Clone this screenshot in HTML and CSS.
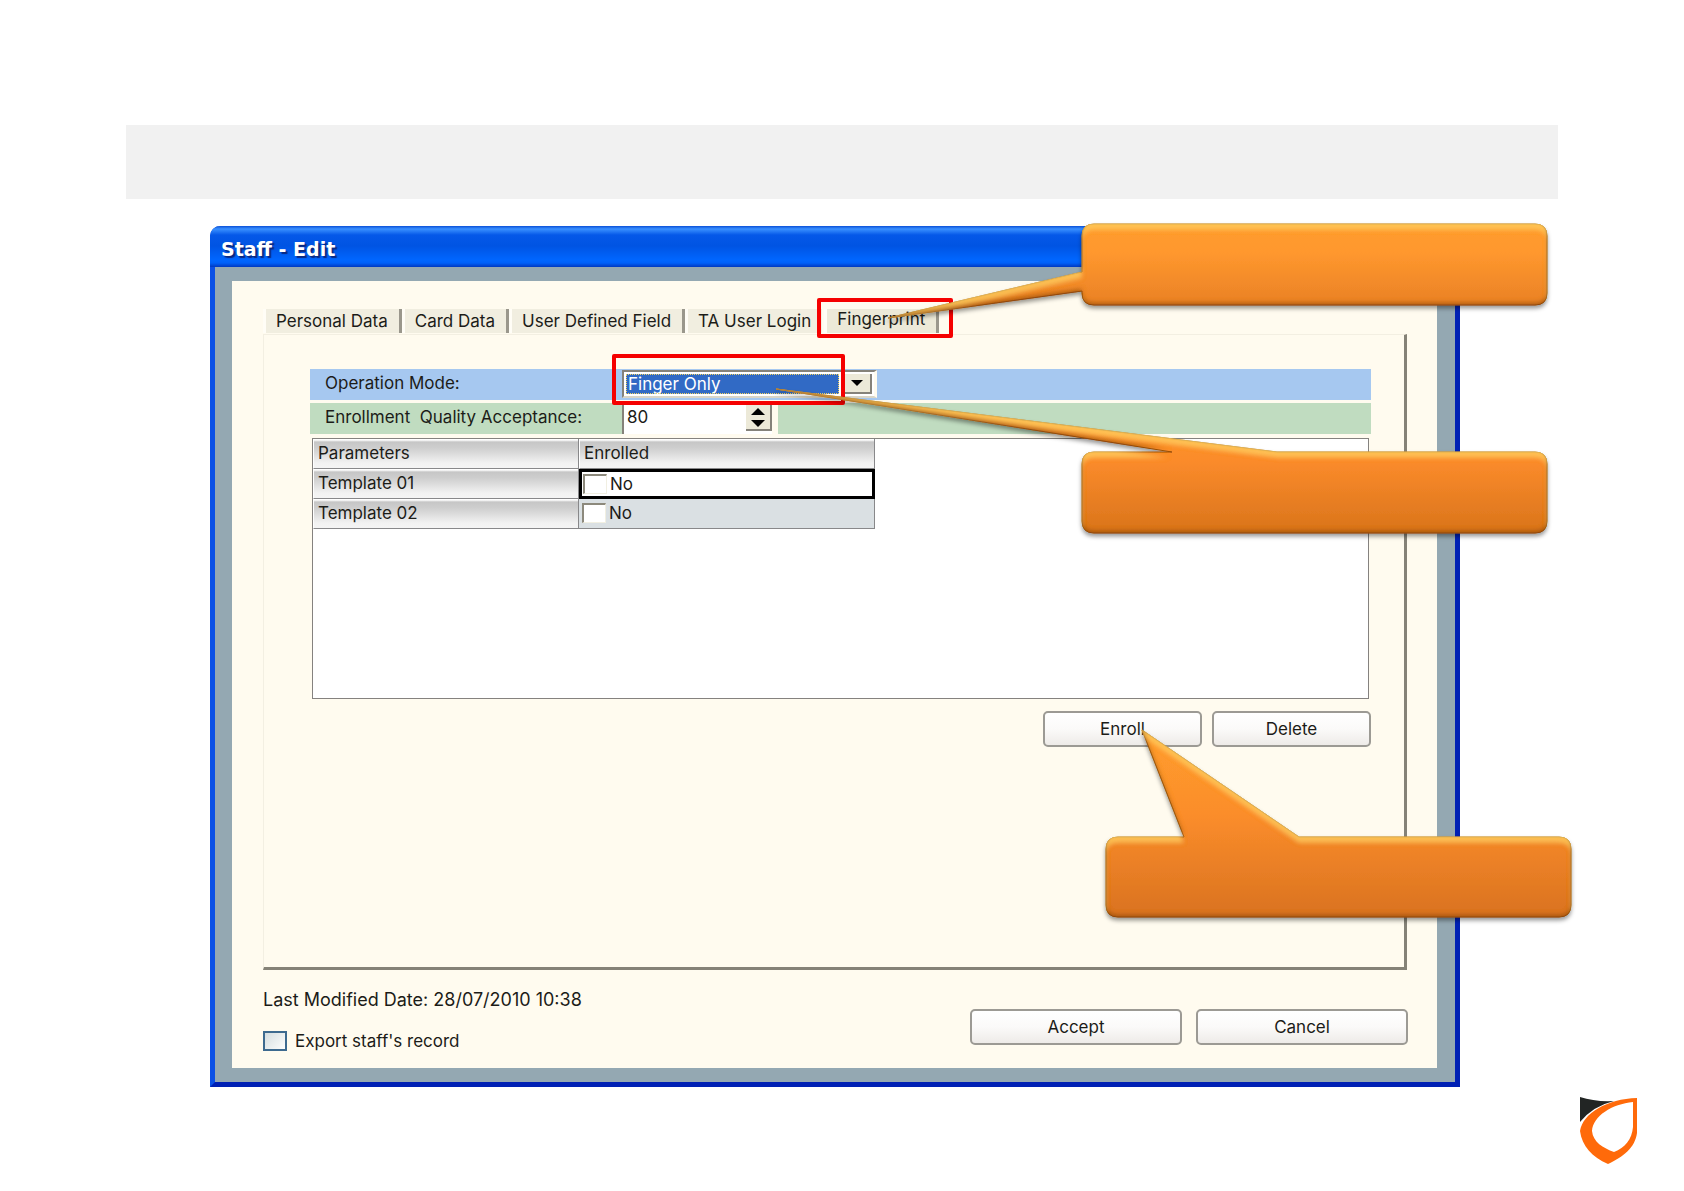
FILE: index.html
```html
<!DOCTYPE html>
<html lang="en">
<head>
    <meta charset="UTF-8">
    <meta name="viewport" content="width=device-width, initial-scale=1.0">
    <title>Staff - Edit</title>
    <link rel="stylesheet" href="styles.css">
</head>
<body>
    <div class="page">
        <header class="banner"></header>

        <main class="window">
            <h1 class="title-bar">Staff - Edit</h1>
            <div class="window-body">
                <div class="tabs" role="tablist">
                    <button type="button" class="tab" role="tab">Personal Data</button>
                    <button type="button" class="tab" role="tab">Card Data</button>
                    <button type="button" class="tab" role="tab">User Defined Field</button>
                    <button type="button" class="tab tab-last" role="tab">TA User Login</button>
                    <button type="button" class="tab tab-active highlight" role="tab" aria-selected="true">Fingerprint</button>
                </div>

                <section class="panel">
                    <div class="row row-blue">
                        <label class="row-label" for="mode">Operation Mode:</label>
                        <div class="combo highlight">
                            <select class="combo-select" id="mode">
                                <option>Finger Only</option>
                            </select>
                            <span class="combo-arrow">
                                <svg width="12" height="6" viewBox="0 0 12 6"><path d="M0 0h12L6 6z"/></svg>
                            </span>
                        </div>
                    </div>
                    <div class="row row-green">
                        <label class="row-label" for="quality">Enrollment&nbsp; Quality Acceptance:</label>
                        <div class="spinner">
                            <input class="spinner-input" id="quality" type="number" value="80">
                            <div class="spinner-buttons">
                                <button type="button" class="spinner-button" aria-label="Increase">
                                    <svg width="14" height="7" viewBox="0 0 14 7"><path d="M0 7h14L7 0z"/></svg>
                                </button>
                                <button type="button" class="spinner-button" aria-label="Decrease">
                                    <svg width="14" height="7" viewBox="0 0 14 7"><path d="M0 0h14L7 7z"/></svg>
                                </button>
                            </div>
                        </div>
                    </div>

                    <div class="grid-box">
                        <table class="templates">
                            <thead>
                                <tr><th class="col-name">Parameters</th><th>Enrolled</th></tr>
                            </thead>
                            <tbody>
                                <tr>
                                    <th>Template 01</th>
                                    <td class="cell-focus"><label class="check"><input type="checkbox" class="check-box">No</label></td>
                                </tr>
                                <tr>
                                    <th>Template 02</th>
                                    <td><label class="check"><input type="checkbox" class="check-box">No</label></td>
                                </tr>
                            </tbody>
                        </table>
                    </div>

                    <div class="panel-actions">
                        <button type="button" class="button">Enroll</button>
                        <button type="button" class="button">Delete</button>
                    </div>
                </section>

                <footer class="footer">
                    <div class="footer-info">
                        <p class="modified">Last Modified Date: 28/07/2010 10:38</p>
                        <label class="export"><input type="checkbox" class="export-box">Export staff's record</label>
                    </div>
                    <div class="footer-actions">
                        <button type="button" class="button button-wide">Accept</button>
                        <button type="button" class="button button-wide">Cancel</button>
                    </div>
                </footer>
            </div>
        </main>

        <!-- callouts laid over the window -->
        <svg class="callouts" width="1684" height="1191" viewBox="0 0 1684 1191" aria-hidden="true">
            <defs>
                <linearGradient id="body1" x1="0" y1="0" x2="0" y2="1">
                    <stop offset="0" stop-color="#ff9c2c"/>
                    <stop offset="0.3" stop-color="#ff982e"/>
                    <stop offset="1" stop-color="#e47b24"/>
                </linearGradient>
                <linearGradient id="body2" gradientUnits="userSpaceOnUse" x1="0" y1="389" x2="0" y2="533">
                    <stop offset="0" stop-color="#ffa030"/>
                    <stop offset="0.5" stop-color="#fb8b2b"/>
                    <stop offset="1" stop-color="#d9741b"/>
                </linearGradient>
                <linearGradient id="body3" gradientUnits="userSpaceOnUse" x1="0" y1="730" x2="0" y2="918">
                    <stop offset="0" stop-color="#ff9e2e"/>
                    <stop offset="0.45" stop-color="#fb8d2b"/>
                    <stop offset="1" stop-color="#d97220"/>
                </linearGradient>
                <filter id="bevel" x="-5%" y="-10%" width="110%" height="125%">
                    <feGaussianBlur in="SourceAlpha" stdDeviation="2" result="soft"/>
                    <feOffset in="soft" dy="3" result="low"/>
                    <feFlood flood-color="#000" flood-opacity="0.4"/>
                    <feComposite in2="low" operator="in" result="shadow"/>
                    <feOffset in="soft" dy="6" result="down"/>
                    <feFlood flood-color="#ffd060" flood-opacity="0.7"/>
                    <feComposite in2="down" operator="out"/>
                    <feComposite in2="SourceAlpha" operator="in" result="light"/>
                    <feOffset in="soft" dy="-3" result="up"/>
                    <feFlood flood-color="#8a450c" flood-opacity="0.7"/>
                    <feComposite in2="up" operator="out"/>
                    <feComposite in2="SourceAlpha" operator="in" result="dark"/>
                    <feMerge>
                        <feMergeNode in="shadow"/>
                        <feMergeNode in="SourceGraphic"/>
                        <feMergeNode in="light"/>
                        <feMergeNode in="dark"/>
                    </feMerge>
                </filter>
            </defs>
            <g stroke="#9c5010" stroke-width="1" filter="url(#bevel)">
                <path fill="url(#body1)" d="M1094 224H1535Q1547 224 1547 236V293Q1547 305 1535 305H1094Q1082 305 1082 293V291L888 318L1082 272V236Q1082 224 1094 224Z"/>
            </g>
            <g stroke="#9c5010" stroke-width="1" filter="url(#bevel)">
                <path fill="url(#body2)" d="M1094 452H1172L776 389L1277 452H1535Q1547 452 1547 464V521Q1547 533 1535 533H1094Q1082 533 1082 521V464Q1082 452 1094 452Z"/>
            </g>
            <g stroke="#9c5010" stroke-width="1" filter="url(#bevel)">
                <path fill="url(#body3)" d="M1118 837H1184L1142 730L1299 837H1559Q1571 837 1571 849V905Q1571 917 1559 917H1118Q1106 917 1106 905V849Q1106 837 1118 837Z"/>
            </g>
        </svg>

        <svg class="logo" width="57" height="67" viewBox="0 0 57 67" role="img" aria-label="Logo">
            <path fill="#222524" d="M0 0Q15 5 34 4Q13 9 0 25Z"/>
            <path fill="#ff6a0a" fill-rule="evenodd" d="M57 1V36C55 51 43 60 28 67C12 60 2 49 0 34C3 16 27 2 57 1ZM53 5C32 7 13 19 12 34C13 45 23 51 34 55C45 51 52 42 53 30Z"/>
        </svg>
    </div>
</body>
</html>
```

FILE: styles.css
```css
* {
    box-sizing: border-box;
}
body {
    margin: 0;
    background-color: #fff;
    font-family: Inter, "Liberation Sans", sans-serif;
    font-size: 17px;
    line-height: 24px;
    color: #1c1c18;
}
button,
select,
input {
    margin: 0;
    padding: 0;
    border: none;
    border-radius: 0;
    font: inherit;
    color: inherit;
}
.page {
    position: relative;
    min-height: 100vh;
    padding: 125px 126px 104px;
}
.banner {
    height: 74px;
    background-color: #f1f1f1;
}

/* window frame */
.window {
    margin: 27px 98px 0 84px;
    border: 5px solid;
    border-color: #0050e0 #0020b4 #0020b4 #0a50e6;
    border-top: none;
    border-radius: 10px 10px 0 0;
    background-color: #94a8b2;
}
.title-bar {
    height: 41px;
    margin: 0 -5px;
    padding: 3px 11px 0;
    border-radius: 10px 10px 0 0;
    background: linear-gradient(#0a50d8 0, #3a90ff 3px, #0558e8 9px, #0054e3 20px, #0066ff 34px, #0060f8 37px, #0038c0 41px);
    font-family: "DejaVu Sans", sans-serif;
    font-size: 19px;
    line-height: 40px;
    font-weight: bold;
    color: #fff;
    text-shadow: 2px 2px 1px #0a2880;
}
.window-body {
    margin: 14px 18px 14px 17px;
    padding: 28px 30px 15px 31px;
    background-color: #fffbef;
}

/* tabs */
.tabs {
    display: flex;
    height: 25px;
}
.tab {
    height: 24px;
    padding: 0 11px 0 10px;
    border-right: 3px solid #9a978c;
    border-left: 3px solid #fffdf6;
    background-color: #f1eee0;
    white-space: nowrap;
}
.tab-last {
    border-right: none;
}
.tab-active {
    margin-left: 2px;
    padding-bottom: 4px;
    background-color: #ece9d8;
    line-height: 20px;
}

/* red marker frames */
.highlight {
    position: relative;
}
.highlight::after {
    content: "";
    position: absolute;
    border: 4px solid #f50000;
    border-radius: 2px;
}
.tab-active::after {
    inset: -11px -17px -5px -10px;
}
.combo::after {
    inset: -18px 29px -9px -12px;
}

/* fingerprint panel */
.panel {
    padding: 34px 33px 220px 46px;
    border: 1px solid #f3efe2;
    border-right: 3px solid #858277;
    border-bottom: 3px solid #858277;
}
.row {
    display: flex;
    align-items: center;
    height: 31px;
    margin-bottom: 3px;
}
.row-blue {
    background-color: #a6c8f0;
}
.row-green {
    margin-bottom: 4px;
    background-color: #c0dcc0;
}
.row-label {
    width: 312px;
    padding: 0 0 4px 15px;
    white-space: nowrap;
}
.combo {
    display: flex;
    width: 255px;
    height: 28px;
    margin-bottom: 2px;
    padding: 2px;
    border: 2px solid #85827a;
    border-right: 3px solid #fffbef;
    border-bottom-color: #d8d5c8;
    background-color: #fff;
}
.combo-select {
    flex: 1;
    padding-left: 2px;
    appearance: none;
    background-color: #316ac5;
    outline: 1px dotted #f0d060;
    outline-offset: -1px;
    line-height: 20px;
    color: #fff;
}
.combo-arrow {
    display: flex;
    align-items: center;
    justify-content: center;
    width: 29px;
    margin-left: 4px;
    border-right: 2px solid #85827a;
    border-bottom: 2px solid #85827a;
    background-color: #ece9d8;
}
.spinner {
    display: flex;
    width: 156px;
    height: 31px;
    border-left: 2px solid #85827a;
    border-right: 6px solid #fffbef;
    background-color: #fff;
}
.spinner-input {
    flex: 1;
    min-width: 0;
    padding: 0 0 4px 3px;
    appearance: textfield;
    background: none;
}
.spinner-input::-webkit-inner-spin-button {
    display: none;
}
.spinner-buttons {
    width: 26px;
    height: 28px;
    padding-top: 2px;
    border-right: 2px solid #85827a;
    border-bottom: 2px solid #85827a;
    background-color: #ece9d8;
}
.spinner-button {
    display: flex;
    align-items: center;
    justify-content: center;
    width: 100%;
    height: 12px;
    background: none;
}

/* template table */
.grid-box {
    height: 261px;
    margin: 0 2px 12px;
    border: 1px solid #85827f;
    background-color: #fff;
}
.templates {
    width: 562px;
    border-collapse: separate;
    border-spacing: 0;
    table-layout: fixed;
}
.templates th,
.templates td {
    height: 30px;
    padding: 0 4px 1px;
    border-right: 1px solid #88888a;
    border-bottom: 1px solid #88888a;
    text-align: left;
    font-weight: normal;
}
.templates th {
    border-left: 1px solid #fff;
    background: linear-gradient(#fff 0, #fff 1px, #c6c6c6 3px, #cecece 9px, #f2f2f2 24px, #f4f4f4 100%);
}
.templates .col-name {
    width: 266px;
}
.templates td {
    padding: 0 3px 1px;
    border-width: 1px;
    background-color: #dae0e3;
}
.templates .cell-focus {
    padding: 0 1px;
    border: 3px solid #000;
    background-color: #fff;
}
.check {
    display: flex;
    align-items: center;
    height: 22px;
    gap: 3px;
}
.check-box {
    width: 24px;
    height: 20px;
    appearance: none;
    border: 1px solid #f1efe2;
    border-top: 2px solid #8c897c;
    border-left: 2px solid #8c897c;
    background-color: #fff;
}

/* buttons */
.panel-actions,
.footer-actions {
    display: flex;
    justify-content: flex-end;
    gap: 10px;
}
.footer-actions {
    gap: 14px;
    margin-right: -1px;
    padding-bottom: 8px;
}
.button {
    width: 159px;
    height: 36px;
    border: 2px solid #9c9a94;
    border-radius: 5px;
    background: linear-gradient(#fff, #fbfaf9 50%, #eeebe8);
}
.button-wide {
    width: 212px;
}

/* footer */
.footer {
    display: flex;
    justify-content: space-between;
    align-items: flex-end;
    padding-top: 18px;
}
.modified {
    margin: 0 0 17px;
    font-size: 18px;
}
.export {
    display: flex;
    align-items: center;
    gap: 8px;
}
.export-box {
    width: 24px;
    height: 20px;
    appearance: none;
    border: 2px solid #3d6a8f;
    background: linear-gradient(135deg, #d4dde0, #fdfdfc);
}

.callouts {
    position: absolute;
    top: 0;
    left: 0;
    pointer-events: none;
}
.logo {
    position: absolute;
    right: 47px;
    bottom: 27px;
}
```
